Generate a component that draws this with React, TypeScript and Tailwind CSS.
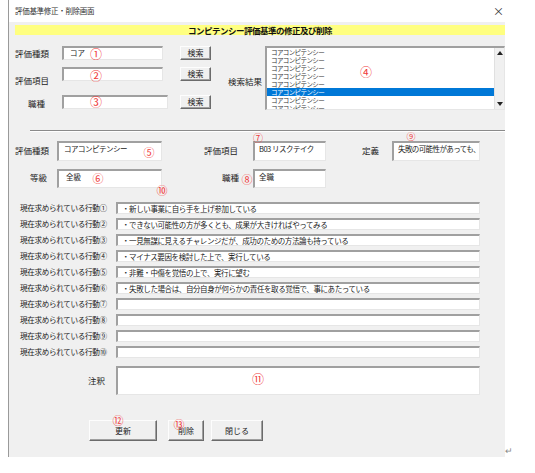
import React from 'react';

const font = { fontFamily: '"Noto Sans CJK JP", "Noto Sans", sans-serif' };

const fieldCls =
    'bg-white border-t-2 border-l-2 border-t-[#a0a0a0] border-l-[#a0a0a0] border-r border-b border-r-[#e6e6e6] border-b-[#e6e6e6]';
const buttonCls =
    'flex items-center justify-center bg-[#f0f0f0] border border-t-[#fdfdfd] border-l-[#fdfdfd] border-r-[#6b6b6b] border-b-[#6b6b6b] shadow-[inset_-1px_-1px_0_#a0a0a0] text-[8px] leading-none text-[#222]';

// red circled annotations laid over the form
const marks = [
    { n: '①', cls: 'left-[96px] top-[54px] text-[12px]' },
    { n: '②', cls: 'left-[96px] top-[76px] text-[12px]' },
    { n: '③', cls: 'left-[96px] top-[102px] text-[12px]' },
    { n: '④', cls: 'left-[366px] top-[72px] text-[12px]' },
    { n: '⑤', cls: 'left-[149px] top-[152px] text-[11px]' },
    { n: '⑥', cls: 'left-[98px] top-[178px] text-[11px]' },
    { n: '⑦', cls: 'left-[258px] top-[138px] text-[10px]' },
    { n: '⑧', cls: 'left-[247px] top-[179px] text-[11px]' },
    { n: '⑨', cls: 'left-[411px] top-[136px] text-[9px]' },
    { n: '⑩', cls: 'left-[162px] top-[190px] text-[11px]' },
    { n: '⑪', cls: 'left-[258px] top-[379px] text-[12px]' },
    { n: '⑫', cls: 'left-[118px] top-[420px] text-[11px]' },
    { n: '⑬', cls: 'left-[179px] top-[424px] text-[11px]' },
];

const behaviors = [
    '・新しい事業に自ら手を上げ参加している',
    '・できない可能性の方が多くとも、成果が大きければやってみる',
    '・一見無謀に見えるチャレンジだが、成功のための方法論も持っている',
    '・マイナス要因を検討した上で、実行している',
    '・非難・中傷を覚悟の上で、実行に望む',
    '・失敗した場合は、自分自身が何らかの責任を取る覚悟で、事にあたっている',
    '',
    '',
    '',
    '',
];
const circled = ['①', '②', '③', '④', '⑤', '⑥', '⑦', '⑧', '⑨', '⑩'];

const SearchRow = ({ label, labelCls, value, inputW, gap }: { label: string; labelCls: string; value: string; inputW: string; gap: string }) => (
    <div className="flex items-start h-[14px]">
        <div className={`w-[53px] text-[8.5px] leading-none text-[#222] ${labelCls}`}>{label}</div>
        <div className={`${fieldCls} ${inputW} h-[14px] pl-[6px] text-[7.5px] leading-[10px] text-[#222]`}>{value}</div>
        <div className={`${buttonCls} ${gap} w-[31px] h-[14px]`}>検索</div>
    </div>
);

const App: React.FC = () => {
    return (
        <div className="relative w-[535px] h-[473px] bg-white overflow-hidden" style={font}>
            <div className="ml-[8px] w-[497px] border-l border-l-[#9a9a9a]">
                {/* Title bar */}
                <div className="h-[22px] flex items-center justify-between pl-[6px] pr-[1px] bg-white">
                    <span className="text-[7.5px] tracking-[-0.3px] text-[#333]">評価基準修正・削除画面</span>
                    <span className="text-[11px] leading-none text-[#333]">×</span>
                </div>

                {/* Body */}
                <div className="h-[435px] bg-[#f0f0f0] pt-[3px]">
                    <div className="ml-[6px] h-[10px] bg-[#ffff80] flex items-center justify-center text-[8.5px] font-bold tracking-[-0.5px] text-[#111]">
                        コンピテンシー評価基準の修正及び削除
                    </div>

                    {/* Search section */}
                    <div className="flex mt-[11px] h-[64px]">
                        <div className="w-[208px] flex flex-col">
                            <SearchRow label="評価種類" labelCls="pl-[6px] pt-[3px]" value="コア" inputW="w-[101px]" gap="ml-[17px]" />
                            <div className="mt-[7px]">
                                <SearchRow label="評価項目" labelCls="pl-[6px] pt-[9px]" value="" inputW="w-[101px]" gap="ml-[17px]" />
                            </div>
                            <div className="mt-[14px]">
                                <SearchRow label="職種" labelCls="pl-[19px] pt-[4px]" value="" inputW="w-[106px]" gap="ml-[12px]" />
                            </div>
                        </div>
                        <div className="w-[48px] flex items-center pl-[11px] pt-[6px] text-[8.5px] text-[#222]">検索結果</div>
                        <div className={`${fieldCls} w-[240px] h-[64px] flex overflow-hidden`}>
                            <div className="flex-1 flex flex-col overflow-hidden">
                                {Array.from({ length: 8 }).map((_, i) => (
                                    <div
                                        key={i}
                                        className={
                                            i === 5
                                                ? 'h-[8px] shrink-0 pl-[4px] text-[6.5px] leading-[8px] tracking-[-0.6px] bg-[#0078d7] text-white'
                                                : 'h-[8px] shrink-0 pl-[4px] text-[6.5px] leading-[8px] tracking-[-0.6px] text-[#333]'
                                        }
                                    >
                                        コアコンピテンシー
                                    </div>
                                ))}
                            </div>
                            <div className="w-[10px] bg-[#f0f0f0] border-l border-l-[#e0e0e0] flex flex-col items-center justify-between py-[3px]">
                                <svg width="6" height="4" viewBox="0 0 6 4"><path d="M0 4 L3 0 L6 4 Z" fill="#222" /></svg>
                                <svg width="6" height="4" viewBox="0 0 6 4"><path d="M0 0 L3 4 L6 0 Z" fill="#222" /></svg>
                            </div>
                        </div>
                    </div>

                    {/* Separator */}
                    <div className="ml-[21px] mt-[20px] h-[2px] border-t border-t-[#8a8a8a] border-b border-b-white" />

                    {/* Detail section */}
                    <div className="mt-[9px] flex items-start h-[20px]">
                        <div className="w-[48px] pl-[6px] pt-[5px] text-[8.5px] leading-none text-[#222]">評価種類</div>
                        <div className={`${fieldCls} w-[105px] h-[20px] pl-[5px] pt-[1px] text-[7.5px] leading-[10px] tracking-[-0.5px] text-[#222]`}>コアコンピテンシー</div>
                        <div className="w-[91px] pl-[42px] pt-[5px] text-[8.5px] leading-none text-[#222]">評価項目</div>
                        <div className={`${fieldCls} w-[73px] h-[20px] pl-[4px] pt-[1px] text-[7.5px] leading-[10px] tracking-[-0.5px] text-[#222] whitespace-nowrap overflow-hidden`}>B03 リスクテイク</div>
                        <div className="w-[66px] pl-[36px] pt-[5px] text-[8.5px] leading-none text-[#222]">定義</div>
                        <div className={`${fieldCls} w-[88px] h-[20px] pl-[4px] pt-[1px] text-[7.5px] leading-[10px] tracking-[-0.6px] text-[#222] whitespace-nowrap overflow-hidden`}>失敗の可能性があっても、</div>
                    </div>
                    <div className="mt-[8px] flex items-start h-[19px]">
                        <div className="w-[48px] pl-[21px] pt-[4px] text-[8.5px] leading-none text-[#222]">等級</div>
                        <div className={`${fieldCls} w-[105px] h-[19px] pl-[7px] pt-[1px] text-[7.5px] leading-[10px] text-[#222]`}>全級</div>
                        <div className="w-[91px] pl-[60px] pt-[4px] text-[8.5px] leading-none text-[#222]">職種</div>
                        <div className={`${fieldCls} w-[73px] h-[19px] pl-[4px] pt-[1px] text-[7.5px] leading-[10px] text-[#222]`}>全職</div>
                    </div>

                    {/* Behaviors */}
                    <div className="mt-[12px] flex flex-col">
                        {behaviors.map((b, i) => (
                            <div key={i} className="flex items-center h-[16px]">
                                <div className="w-[107px] pl-[11px] text-[7.6px] leading-none tracking-[-0.35px] text-[#222] whitespace-nowrap">
                                    現在求められている行動{circled[i]}
                                </div>
                                <div className={`${fieldCls} w-[364px] h-[12px] pl-[4px] text-[7.5px] leading-[9px] tracking-[-0.4px] text-[#222] whitespace-nowrap overflow-hidden`}>
                                    {b}
                                </div>
                            </div>
                        ))}
                    </div>

                    {/* Notes */}
                    <div className="mt-[6px] flex items-center h-[29px]">
                        <div className="w-[107px] pr-[11px] text-right text-[8.5px] leading-none text-[#222]">注釈</div>
                        <div className={`${fieldCls} w-[364px] h-[29px]`} />
                    </div>

                    {/* Buttons */}
                    <div className="mt-[25px] flex items-center pl-[80px]">
                        <div className={`${buttonCls} w-[68px] h-[21px]`}>更新</div>
                        <div className={`${buttonCls} ml-[11px] w-[36px] h-[21px]`}>削除</div>
                        <div className={`${buttonCls} ml-[7px] w-[52px] h-[21px]`}>閉じる</div>
                    </div>
                </div>
            </div>

            {/* Return mark */}
            <span className="absolute left-[505px] top-[446px] text-[9px] leading-none text-[#888]">↵</span>

            {marks.map((m) => (
                <span
                    key={m.n}
                    className={`absolute -translate-x-1/2 -translate-y-1/2 leading-none text-[#f03a3a] ${m.cls}`}
                >
                    {m.n}
                </span>
            ))}
        </div>
    );
};

export default App;
